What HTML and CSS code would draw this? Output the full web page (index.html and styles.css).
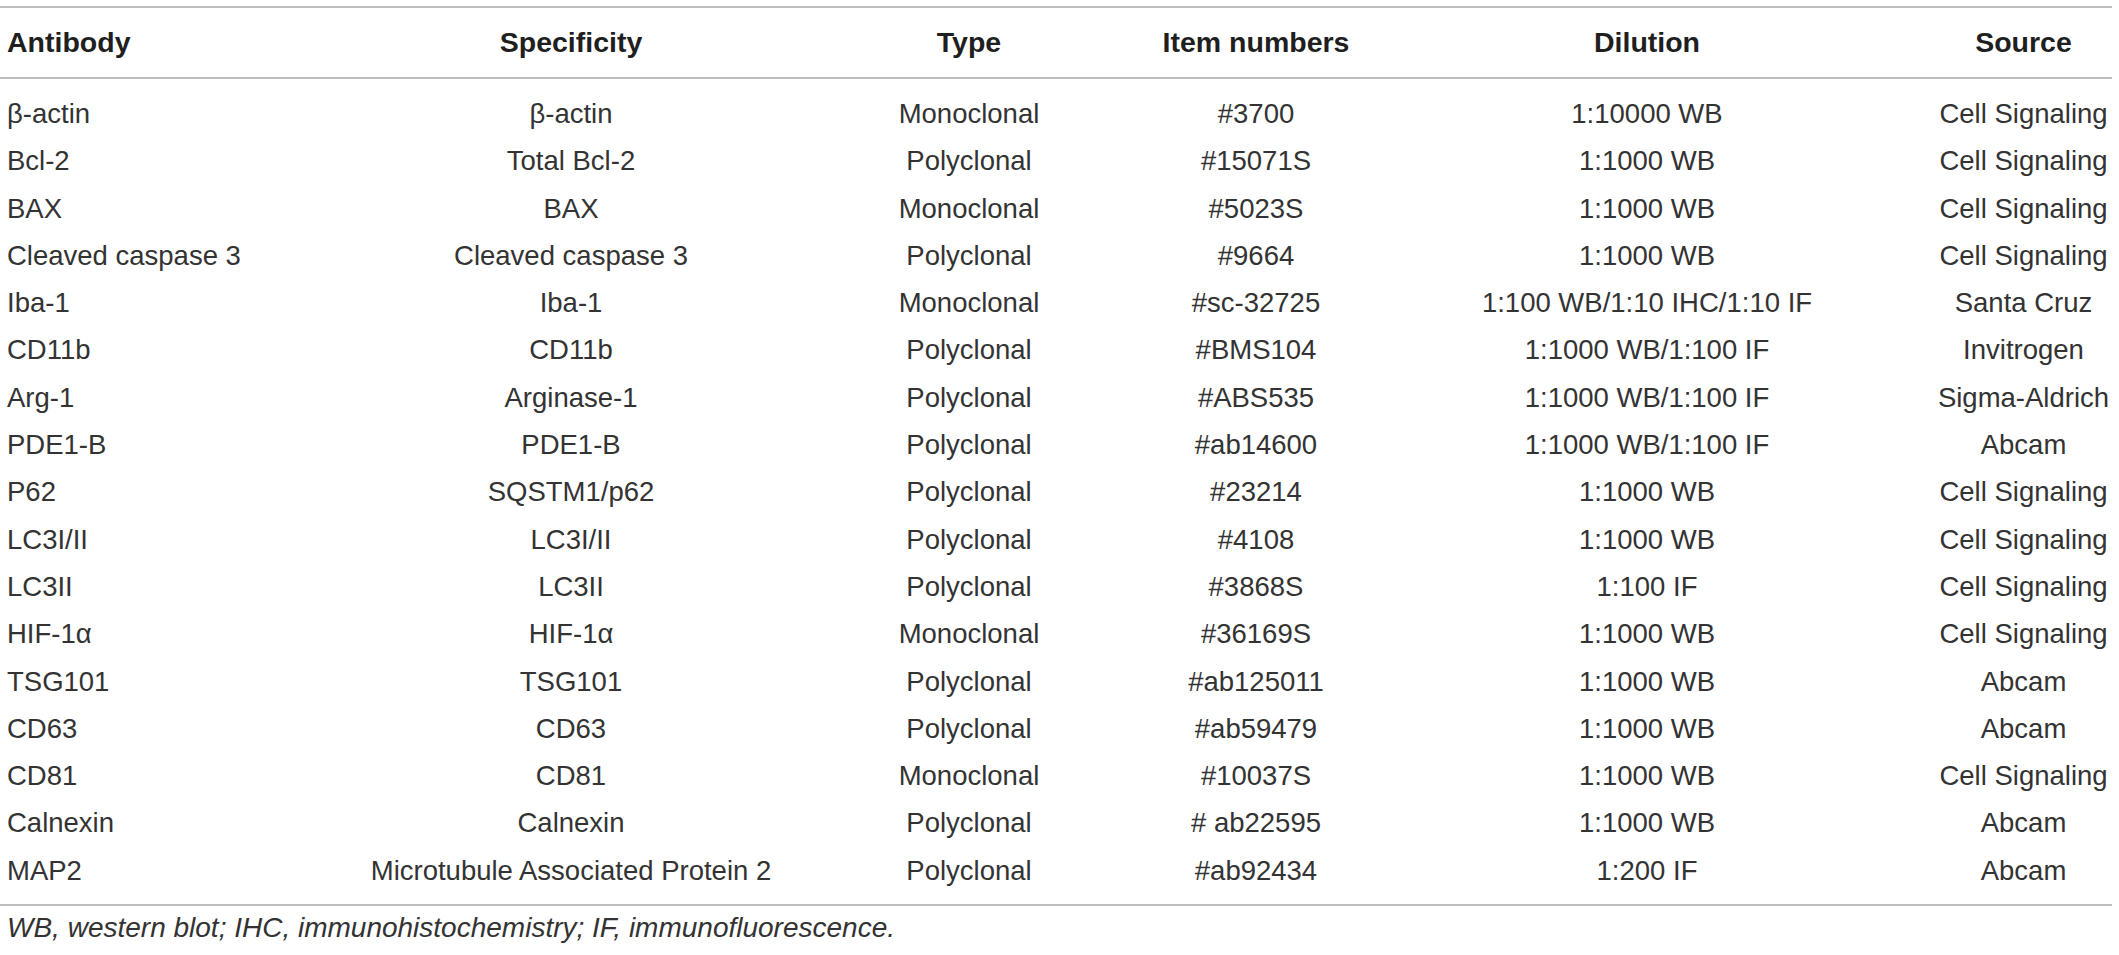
FILE: index.html
```html
<!DOCTYPE html>
<html lang="en">
<head>
<meta charset="utf-8">
<title>Antibodies</title>
<link rel="stylesheet" href="styles.css">
</head>
<body>
<div class="page">
  <div class="table">
    <div class="row head">
      <div class="cell first">Antibody</div>
      <div class="cell">Specificity</div>
      <div class="cell">Type</div>
      <div class="cell">Item numbers</div>
      <div class="cell">Dilution</div>
      <div class="cell">Source</div>
    </div>
    <div class="body">
      <div class="row"><div class="cell first">β-actin</div><div class="cell">β-actin</div><div class="cell">Monoclonal</div><div class="cell">#3700</div><div class="cell">1:10000 WB</div><div class="cell">Cell Signaling</div></div>
      <div class="row"><div class="cell first">Bcl-2</div><div class="cell">Total Bcl-2</div><div class="cell">Polyclonal</div><div class="cell">#15071S</div><div class="cell">1:1000 WB</div><div class="cell">Cell Signaling</div></div>
      <div class="row"><div class="cell first">BAX</div><div class="cell">BAX</div><div class="cell">Monoclonal</div><div class="cell">#5023S</div><div class="cell">1:1000 WB</div><div class="cell">Cell Signaling</div></div>
      <div class="row"><div class="cell first">Cleaved caspase 3</div><div class="cell">Cleaved caspase 3</div><div class="cell">Polyclonal</div><div class="cell">#9664</div><div class="cell">1:1000 WB</div><div class="cell">Cell Signaling</div></div>
      <div class="row"><div class="cell first">Iba-1</div><div class="cell">Iba-1</div><div class="cell">Monoclonal</div><div class="cell">#sc-32725</div><div class="cell">1:100 WB/1:10 IHC/1:10 IF</div><div class="cell">Santa Cruz</div></div>
      <div class="row"><div class="cell first">CD11b</div><div class="cell">CD11b</div><div class="cell">Polyclonal</div><div class="cell">#BMS104</div><div class="cell">1:1000 WB/1:100 IF</div><div class="cell">Invitrogen</div></div>
      <div class="row"><div class="cell first">Arg-1</div><div class="cell">Arginase-1</div><div class="cell">Polyclonal</div><div class="cell">#ABS535</div><div class="cell">1:1000 WB/1:100 IF</div><div class="cell">Sigma-Aldrich</div></div>
      <div class="row"><div class="cell first">PDE1-B</div><div class="cell">PDE1-B</div><div class="cell">Polyclonal</div><div class="cell">#ab14600</div><div class="cell">1:1000 WB/1:100 IF</div><div class="cell">Abcam</div></div>
      <div class="row"><div class="cell first">P62</div><div class="cell">SQSTM1/p62</div><div class="cell">Polyclonal</div><div class="cell">#23214</div><div class="cell">1:1000 WB</div><div class="cell">Cell Signaling</div></div>
      <div class="row"><div class="cell first">LC3I/II</div><div class="cell">LC3I/II</div><div class="cell">Polyclonal</div><div class="cell">#4108</div><div class="cell">1:1000 WB</div><div class="cell">Cell Signaling</div></div>
      <div class="row"><div class="cell first">LC3II</div><div class="cell">LC3II</div><div class="cell">Polyclonal</div><div class="cell">#3868S</div><div class="cell">1:100 IF</div><div class="cell">Cell Signaling</div></div>
      <div class="row"><div class="cell first">HIF-1α</div><div class="cell">HIF-1α</div><div class="cell">Monoclonal</div><div class="cell">#36169S</div><div class="cell">1:1000 WB</div><div class="cell">Cell Signaling</div></div>
      <div class="row"><div class="cell first">TSG101</div><div class="cell">TSG101</div><div class="cell">Polyclonal</div><div class="cell">#ab125011</div><div class="cell">1:1000 WB</div><div class="cell">Abcam</div></div>
      <div class="row"><div class="cell first">CD63</div><div class="cell">CD63</div><div class="cell">Polyclonal</div><div class="cell">#ab59479</div><div class="cell">1:1000 WB</div><div class="cell">Abcam</div></div>
      <div class="row"><div class="cell first">CD81</div><div class="cell">CD81</div><div class="cell">Monoclonal</div><div class="cell">#10037S</div><div class="cell">1:1000 WB</div><div class="cell">Cell Signaling</div></div>
      <div class="row"><div class="cell first">Calnexin</div><div class="cell">Calnexin</div><div class="cell">Polyclonal</div><div class="cell"># ab22595</div><div class="cell">1:1000 WB</div><div class="cell">Abcam</div></div>
      <div class="row"><div class="cell first">MAP2</div><div class="cell">Microtubule Associated Protein 2</div><div class="cell">Polyclonal</div><div class="cell">#ab92434</div><div class="cell">1:200 IF</div><div class="cell">Abcam</div></div>
    </div>
  </div>
  <p class="foot">WB, western blot; IHC, immunohistochemistry; IF, immunofluorescence.</p>
</div>
</body>
</html>
```

FILE: styles.css
```css
html, body {
  margin: 0;
  padding: 0;
  background: #ffffff;
}

.page {
  padding-top: 6px;
  width: 2112px;
  font-family: "Liberation Sans", Arial, sans-serif;
  color: #333333;
}

.table {
  width: 2112px;
}

.row {
  display: grid;
  grid-template-columns: 357px 428px 368px 206px 576px 177px;
}

.cell {
  text-align: center;
  white-space: nowrap;
}

.cell.first {
  text-align: left;
  padding-left: 7px;
}

.head {
  border-top: 2px solid #bdbdbd;
  border-bottom: 2px solid #bdbdbd;
  font-weight: bold;
  font-size: 28.5px;
  line-height: 69px;
  color: #1f1f1f;
}

.body {
  padding-top: 11px;
  padding-bottom: 10px;
  border-bottom: 2px solid #bdbdbd;
  font-size: 27.5px;
  line-height: 47.3px;
}

.foot {
  margin: 2px 0 0 0;
  padding-left: 7px;
  font-style: italic;
  font-size: 28px;
  line-height: 40px;
  color: #333333;
}
```
